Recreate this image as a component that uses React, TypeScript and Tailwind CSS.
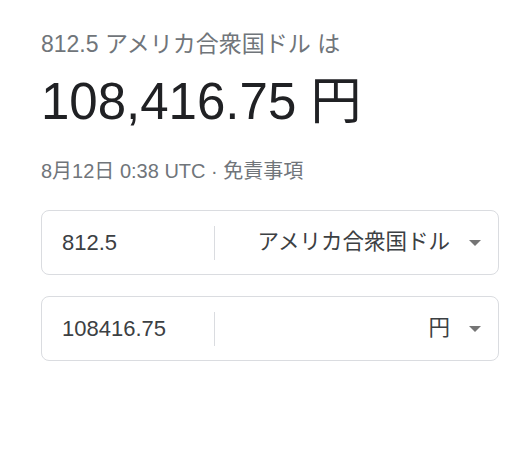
import React from "react";

const font = { fontFamily: '"Liberation Sans", Arial, "Noto Sans CJK JP", sans-serif' };

function Caret() {
  return (
    <svg width="12" height="6" viewBox="0 0 12 6" className="shrink-0">
      <path d="M0 0 L12 0 L6 6 Z" fill="#757575" />
    </svg>
  );
}

function Row({ value, unit }: { value: string; unit: string }) {
  return (
    <div className="flex h-[65px] w-[458px] items-center rounded-[8px] border border-[#dadce0] bg-white">
      <div className="flex h-full w-[172px] shrink-0 items-center pl-[20px] text-[22px] text-[#3c4043]">
        {value}
      </div>
      <div className="h-[34px] w-px bg-[#dadce0]" />
      <div className="flex flex-1 items-center justify-end gap-[19px] pr-[17px] text-[21.5px] text-[#3c4043]">
        <span>{unit}</span>
        <Caret />
      </div>
    </div>
  );
}

export default function App() {
  return (
    <div className="min-h-[454px] w-[517px] bg-white pl-[41px] pt-[30px]" style={font}>
      <div className="text-[23px] leading-[28px] text-[#70757a]">812.5 アメリカ合衆国ドル は</div>
      <div className="mt-[14px] text-[51px] leading-[60px] text-[#202124]">108,416.75 円</div>
      <div className="mt-[26px] text-[20px] leading-[26px] text-[#70757a]">8月12日 0:38 UTC · 免責事項</div>
      <div className="mt-[26px] flex flex-col gap-[21px]">
        <Row value="812.5" unit="アメリカ合衆国ドル" />
        <Row value="108416.75" unit="円" />
      </div>
    </div>
  );
}
